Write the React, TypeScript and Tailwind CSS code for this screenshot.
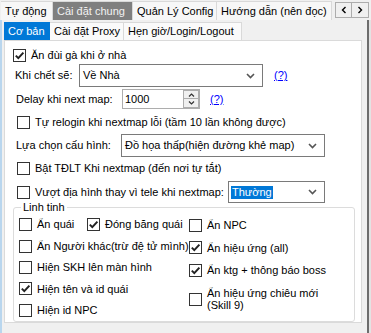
import React from "react";

const OUTER_TABS = [
  { label: "Tự động", w: "w-[52px]", active: false },
  { label: "Cài đặt chung", w: "w-[80px]", active: true },
  { label: "Quản Lý Config", w: "w-[84px]", active: false },
  { label: "Hướng dẫn (nên đọc)", w: "w-[115px]", active: false },
];

const INNER_TABS = [
  { label: "Cơ bản", w: "w-[46px]", active: true },
  { label: "Cài đặt Proxy", w: "w-[74px]", active: false },
  { label: "Hẹn giờ/Login/Logout", w: "w-[118px]", active: false },
];

function Box({ checked }: { checked?: boolean }) {
  return (
    <span className="w-[13px] h-[13px] shrink-0 border border-[#333333] bg-white flex items-center justify-center">
      {checked && (
        <svg width="11" height="11" viewBox="0 0 11 11">
          <path d="M1.8 5.6 L4.3 8.1 L9.4 2.6" fill="none" stroke="#222222" strokeWidth="2" />
        </svg>
      )}
    </span>
  );
}

function Check({ label, checked }: { label: React.ReactNode; checked?: boolean }) {
  return (
    <div className="flex items-center gap-[5px]">
      <Box checked={checked} />
      <span className="leading-[12.5px] whitespace-nowrap">{label}</span>
    </div>
  );
}

function Chevron() {
  return (
    <svg width="9" height="6" viewBox="0 0 9 6" className="shrink-0">
      <path d="M1 1 L4.5 4.5 L8 1" fill="none" stroke="#555555" strokeWidth="1.6" />
    </svg>
  );
}

function Combo({ w, h, value, selected }: { w: string; h: string; value: string; selected?: boolean }) {
  return (
    <div className={`${w} ${h} shrink-0 border border-[#7a7a7a] bg-white flex items-center pl-[2px] pr-[7px]`}>
      <span className={selected ? "bg-[#0078d7] text-white px-[1px] leading-[13px]" : "pl-[1px]"}>{value}</span>
      <span className="flex-1" />
      <Chevron />
    </div>
  );
}

function Help() {
  return <span className="text-[#0000ff] underline">(?)</span>;
}

export default function App() {
  return (
    <div
      className="w-[371px] h-[333px] overflow-hidden bg-[#f0f0f0] flex flex-col text-[11px] text-black"
      style={{ fontFamily: '"Liberation Sans", Arial, sans-serif' }}
    >
      {/* outer tabs */}
      <div className="h-[20px] flex items-start pl-[1px] shrink-0">
        {OUTER_TABS.map((t) => (
          <div
            key={t.label}
            className={`${t.w} h-[19px] mt-[1px] flex items-center pl-[4px] border-t border-r border-[#d9d9d9] ${
              t.active ? "bg-[#7f7f7f] text-[#f2f2f2]" : "bg-[#f7f7f7]"
            }`}
          >
            {t.label}
          </div>
        ))}
        <div className="ml-[3px] mt-[2px] flex">
          <div className="w-[17px] h-[16px] border border-[#adadad] bg-[#f0f0f0] flex items-center justify-center">
            <svg width="6" height="8" viewBox="0 0 6 8"><path d="M4.5 1 L1.5 4 L4.5 7" fill="none" stroke="#000" strokeWidth="1.4" /></svg>
          </div>
          <div className="w-[17px] h-[16px] border border-l-0 border-[#adadad] bg-[#f0f0f0] flex items-center justify-center">
            <svg width="6" height="8" viewBox="0 0 6 8"><path d="M1.5 1 L4.5 4 L1.5 7" fill="none" stroke="#000" strokeWidth="1.4" /></svg>
          </div>
        </div>
      </div>

      {/* outer page */}
      <div className="flex-1 flex">
        <div className="w-[2px] bg-[#b9d6ee]" />
        <div className="flex-1 flex flex-col">
          {/* inner tabs */}
          <div className="h-[20px] flex items-end pl-[2px] shrink-0">
            {INNER_TABS.map((t) => (
              <div
                key={t.label}
                className={`${t.w} h-[18px] flex items-center pl-[4px] border-r border-t ${
                  t.active ? "bg-[#0078d7] text-white border-[#0078d7]" : "bg-[#fafafa] border-[#d9d9d9]"
                }`}
              >
                {t.label}
              </div>
            ))}
          </div>

          {/* page */}
          <div className="ml-[2px] w-[358px] h-[283px] bg-white border border-[#dadada] flex flex-col">
            <div className="h-[17px] mt-[6px] flex items-center pl-[8px]">
              <Check label="Ăn đùi gà khi ở nhà" checked />
            </div>

            <div className="h-[23px] flex items-center pl-[10px]">
              <span className="w-[64px] shrink-0">Khi chết sẽ:</span>
              <Combo w="w-[184px]" h="h-[23px]" value="Về Nhà" />
              <span className="ml-[11px]"><Help /></span>
            </div>

            <div className="h-[20px] mt-[2px] flex items-center pl-[11px]">
              <span className="w-[106px] shrink-0">Delay khi next map:</span>
              <div className="w-[78px] h-[20px] border border-[#adadad] bg-white flex items-center pl-[2px]">
                <span className="flex-1">1000</span>
                <div className="flex flex-col w-[16px] h-[18px]">
                  <div className="h-[9px] border border-[#adadad] bg-[#f0f0f0] flex items-center justify-center">
                    <svg width="7" height="4" viewBox="0 0 7 4"><path d="M1 3.5 L3.5 1 L6 3.5" fill="none" stroke="#333" strokeWidth="1.2" /></svg>
                  </div>
                  <div className="h-[9px] border border-t-0 border-[#adadad] bg-[#f0f0f0] flex items-center justify-center">
                    <svg width="7" height="4" viewBox="0 0 7 4"><path d="M1 0.5 L3.5 3 L6 0.5" fill="none" stroke="#333" strokeWidth="1.2" /></svg>
                  </div>
                </div>
              </div>
              <span className="ml-[10px]"><Help /></span>
            </div>

            <div className="h-[18px] mt-[4px] flex items-center pl-[12px]">
              <Check label="Tự relogin khi nextmap lỗi (tầm 10 lần không được)" />
            </div>

            <div className="h-[23px] mt-[3px] flex items-center pl-[11px]">
              <span className="w-[105px] shrink-0">Lựa chọn cấu hình:</span>
              <Combo w="w-[204px]" h="h-[23px]" value="Đồ họa thấp(hiện đường khẻ map)" />
            </div>

            <div className="h-[18px] mt-[2px] flex items-center pl-[12px]">
              <Check label="Bật TĐLT Khi nextmap (đến nơi tự tắt)" />
            </div>

            <div className="h-[22px] mt-[4px] flex items-center pl-[12px]">
              <div className="w-[211px] shrink-0">
                <Check label="Vượt địa hình thay vì tele khi nextmap:" />
              </div>
              <Combo w="w-[97px]" h="h-[22px]" value="Thường" selected />
            </div>

            {/* group box */}
            <div className="relative ml-[8px] mt-[4px] w-[342px] h-[115px] border border-[#dcdcdc] rounded-[3px] flex pl-[5px] pt-[6px]">
              <span className="absolute -top-[7px] left-[7px] bg-white px-[2px] leading-[13px]">Linh tinh</span>
              <div className="w-[170px] flex flex-col">
                <div className="h-[22.5px] flex items-center">
                  <div className="w-[68px]"><Check label="Ẩn quái" /></div>
                  <Check label="Đóng băng quái" checked />
                </div>
                <div className="h-[22.5px] flex items-center"><Check label="Ẩn Người khác(trừ đệ tử mình)" /></div>
                <div className="h-[22.5px] flex items-center"><Check label="Hiện SKH lên màn hình" /></div>
                <div className="h-[22.5px] flex items-center"><Check label="Hiện tên và id quái" checked /></div>
                <div className="h-[22.5px] flex items-center"><Check label="Hiện id NPC" /></div>
              </div>
              <div className="flex flex-col">
                <div className="h-[22.5px] flex items-center"><Check label="Ẩn NPC" /></div>
                <div className="h-[22.5px] flex items-center"><Check label="Ẩn hiệu ứng (all)" checked /></div>
                <div className="h-[22.5px] flex items-center"><Check label="Ẩn ktg + thông báo boss" checked /></div>
                <div className="mt-[5px]">
                  <Check label={<>Ẩn hiệu ứng chiêu mới<br />(Skill 9)</>} />
                </div>
              </div>
            </div>
          </div>
        </div>
        <div className="w-[5px]" />
        <div className="w-[2px] bg-[#6d6d6d]" />
        <div className="w-[2px] bg-[#e3e3e3]" />
      </div>
    </div>
  );
}
